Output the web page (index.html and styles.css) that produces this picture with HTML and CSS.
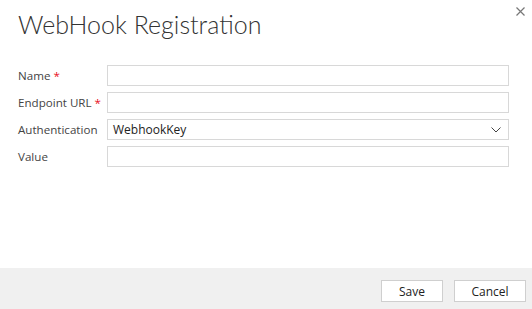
FILE: index.html
```html
<!DOCTYPE html>
<html lang="en">
<head>
    <meta charset="UTF-8">
    <title>WebHook Registration</title>
    <link rel="stylesheet" href="styles.css">
</head>
<body>
    <div class="dialog">
        <div class="content">
            <button class="close" aria-label="Close">
                <svg width="9" height="9" viewBox="0 0 9 9"><path d="M0.5 0.5 L8.5 8.5 M8.5 0.5 L0.5 8.5" stroke="#777" stroke-width="1.2"/></svg>
            </button>
            <h1 class="title">WebHook Registration</h1>

            <div class="form">
                <label class="label">Name <span class="req">*</span></label>
                <input class="field" type="text">

                <label class="label">Endpoint URL <span class="req">*</span></label>
                <input class="field" type="text">

                <label class="label">Authentication</label>
                <div class="field select">
                    <span>WebhookKey</span>
                    <svg width="10" height="6" viewBox="0 0 10 6"><path d="M0.5 0.5 L5 5 L9.5 0.5" fill="none" stroke="#444" stroke-width="1"/></svg>
                </div>

                <label class="label">Value</label>
                <input class="field" type="text">
            </div>
        </div>

        <div class="footer">
            <button class="btn">Save</button>
            <button class="btn">Cancel</button>
        </div>
    </div>
</body>
</html>
```

FILE: styles.css
```css
body {
    margin: 0;
    font-family: "Open Sans", "Noto Sans", sans-serif;
    color: #333;
    background: #fff;
}

.dialog {
    width: 532px;
    height: 309px;
    display: flex;
    flex-direction: column;
}

.content {
    flex: 1;
    position: relative;
    padding: 0 23px 0 18px;
}

.close {
    position: absolute;
    top: 4px;
    right: 7px;
    border: none;
    background: none;
    padding: 0;
    cursor: pointer;
}

.title {
    margin: 0;
    padding-top: 9px;
    height: 65px;
    box-sizing: border-box;
    font-family: "Lato", "Open Sans", sans-serif;
    font-size: 25px;
    font-weight: 300;
    color: #333;
}

.form {
    display: grid;
    grid-template-columns: 89px 1fr;
    row-gap: 6px;
    align-items: center;
}

.label {
    font-size: 11.6px;
    color: #444;
    white-space: nowrap;
}

.req {
    color: #e81123;
}

.field {
    height: 21px;
    box-sizing: border-box;
    border: 1px solid #d8d8d8;
    margin: 0;
    padding: 0 5px;
    font-family: inherit;
    font-size: 12px;
    color: #222;
    outline: none;
}

.select {
    display: flex;
    align-items: center;
    justify-content: space-between;
    padding: 0 7px 0 5px;
}

.footer {
    height: 41px;
    background: #f0f0f0;
    display: flex;
    justify-content: flex-end;
    align-items: flex-start;
    gap: 11px;
    padding: 12px 6px 0 0;
    box-sizing: border-box;
}

.btn {
    height: 22px;
    border: 1px solid #cfcfcf;
    background: #fff;
    font-family: inherit;
    font-size: 12px;
    color: #222;
    padding: 0;
    width: 62px;
}

.btn + .btn {
    width: 72px;
}
```
